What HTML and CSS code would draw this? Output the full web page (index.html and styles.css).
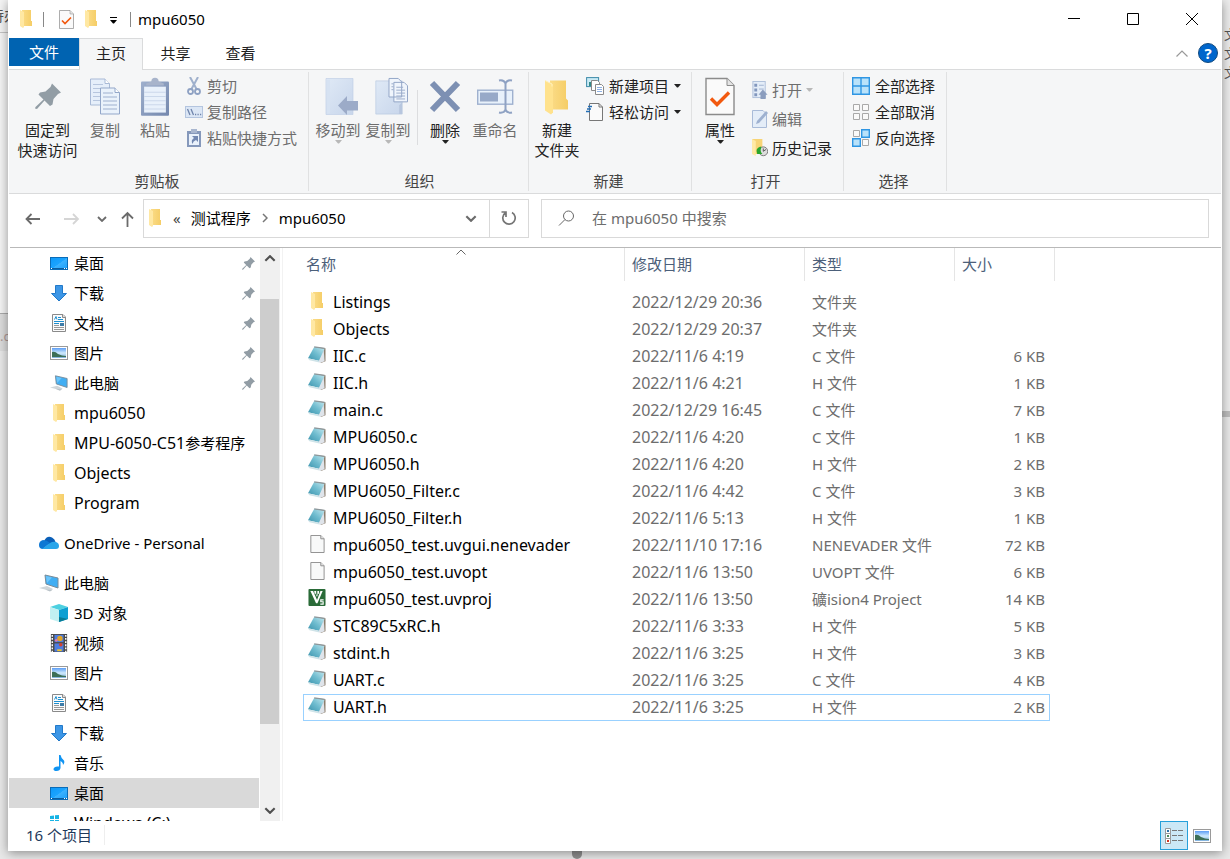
FILE: index.html
```
<!DOCTYPE html>
<html lang="zh-CN">
<head>
<meta charset="utf-8">
<title>mpu6050</title>
<link rel="stylesheet" href="styles.css">
</head>
<body>
<svg class="sprite" aria-hidden="true">
  <defs>
    <linearGradient id="gFold" x1="0" x2="1"><stop offset="0" stop-color="#fbdc88"/><stop offset="1" stop-color="#f5cd66"/></linearGradient>
    <linearGradient id="gSky" x1="0" y1="0" x2="0" y2="1"><stop offset="0" stop-color="#5c9df5"/><stop offset="0.5" stop-color="#cfeafc"/><stop offset="1" stop-color="#7fb0dc"/></linearGradient>
    <linearGradient id="gNote" x1="0" y1="1" x2="1" y2="0"><stop offset="0" stop-color="#3b93ad"/><stop offset="0.5" stop-color="#6fbccf"/><stop offset="1" stop-color="#c5e8ef"/></linearGradient>
    <linearGradient id="gClip" x1="0" y1="0" x2="1" y2="1"><stop offset="0" stop-color="#9fb0cd"/><stop offset="1" stop-color="#7488ae"/></linearGradient>
    <linearGradient id="gPale" x1="0" y1="0" x2="1" y2="1"><stop offset="0" stop-color="#dfe9f6"/><stop offset="1" stop-color="#c8d6eb"/></linearGradient>
    <linearGradient id="gDesk" x1="0" y1="0" x2="1" y2="1"><stop offset="0" stop-color="#0d98f8"/><stop offset="0.5" stop-color="#1ba4ff"/><stop offset="0.52" stop-color="#3bb2ff"/><stop offset="1" stop-color="#1a9ef8"/></linearGradient>
  </defs>
  <symbol id="folder" viewBox="0 0 12 18"><path d="M2 0H11V11H12V16H2z" fill="url(#gFold)"/><path d="M0 0L4 2V17L3 18L0 16z" fill="#ffe8a3"/></symbol>
  <symbol id="checkdoc" viewBox="0 0 30 38"><path d="M1 1H22L29 8V37H1z" fill="#fafafa" stroke="#8b8b8b" stroke-width="1.4"/><path d="M22 1V8H29" fill="#e4e4e4" stroke="#8b8b8b"/><path d="M6 21L12 27L24 15" fill="none" stroke="#f2590f" stroke-width="3.4"/></symbol>
  <symbol id="pin" viewBox="0 0 26 26"><path d="M17 0L26 9L23 10.500L18.500 15.500L17.500 21L15 22.500L9.500 17L2 25.500L0 25L.5 23.500L8.500 16L3.500 11L5 9L10.500 8L15.500 3.500z" fill="#929da5"/></symbol>
  <symbol id="copy" viewBox="0 0 30 36"><path d="M.5 .5H15L19.500 5V26.500H.5z" fill="#e6effa" stroke="#a9bad6"/><path d="M15 .5V5H19.500" fill="#fff" stroke="#a9bad6"/><path d="M3 6h10M3 10h13M3 14h13M3 18h13M3 22h13" stroke="#b7c6de"/><path d="M10.500 9.500H25L29.500 14V35.500H10.500z" fill="#eaf2fb" stroke="#93a7c9"/><path d="M25 9.500V14H29.500" fill="#fff" stroke="#93a7c9"/><path d="M13 14.500h10M13 18.500h14M13 22.500h14M13 26.500h14M13 30.500h14" stroke="#9eb0cf"/></symbol>
  <symbol id="paste" viewBox="0 0 27 37"><rect y="4" width="27" height="33" rx="1" fill="url(#gClip)"/><rect x="3" y="9" width="21" height="25" fill="#e9f1fb"/><path d="M3 14.500h21M3 18.500h21M3 22.500h21M3 26.500h21M3 30.500h21" stroke="#cbd8eb"/><path d="M5 8V6L10 4a3.500 3.500 0 0 1 7 0L22 6V8z" fill="#a8b4cb"/></symbol>
  <symbol id="cut" viewBox="0 0 14 18"><path d="M3 0L9.500 12M11 0L4.500 12" stroke="#9fb0cc" stroke-width="2" fill="none"/><ellipse cx="3.500" cy="14.500" rx="2.500" ry="2.500" fill="none" stroke="#8ea1c3" stroke-width="1.800"/><ellipse cx="10.500" cy="14.500" rx="2.500" ry="2.500" fill="none" stroke="#8ea1c3" stroke-width="1.800"/></symbol>
  <symbol id="path" viewBox="0 0 18 12"><rect x=".5" y=".5" width="17" height="11" fill="#dbe6f5" stroke="#b4c5df"/><path d="M2.500 3L5 9M6 3L8.500 9M10 8.500h1.200M12.500 8.500h1.200M15 8.500h1.200" stroke="#6f84ab" stroke-width="1.300"/></symbol>
  <symbol id="shortcut" viewBox="0 0 14 18"><rect y="2" width="14" height="16" fill="#8598bb"/><rect x="4" width="6" height="4" fill="#a8b6cf"/><rect x="2" y="5" width="10" height="11" fill="#e9f1fb"/><path d="M5 7H11V13L9 11Q6 12 5.500 15Q3.500 11 7 9z" fill="#7187b1"/></symbol>
  <symbol id="moveto" viewBox="-7 0 39 38"><path d="M0 1H27V37H0z" fill="url(#gPale)" stroke="#c2d0e6" stroke-width=".7"/><path d="M1 2h3v34H1z" fill="#d6e2f2"/><path d="M12 28L21 18.500V23.500H32V33H21V37.500z" fill="#9cabc8"/></symbol>
  <symbol id="copyto" viewBox="-7 0 40 38"><path d="M0 3H27V37H0z" fill="url(#gPale)" stroke="#b8c8e0" stroke-width=".7"/><path d="M13.500 .5H23L26.500 4V19.500H13.500zM18.500 4.500H29L32.500 8V24.500H18.500z" fill="#f0f5fc" stroke="#92a5c6"/><path d="M16 6h2M16 9h2M16 12h2M21 9.500h7M21 12.500h9M21 15.500h9M21 18.500h9M21 21.500h9" stroke="#9aaccb"/><path d="M24 37V28l3-3v12z" fill="#b7c6de"/></symbol>
  <symbol id="del" viewBox="0 0 32 32"><path d="M3 2.500L29 29.500M29 2.500L3 29.500" stroke="#7d90b3" stroke-width="6"/></symbol>
  <symbol id="rename" viewBox="0 0 37 34"><rect x=".7" y="10.700" width="35" height="14" fill="#e8f1fb" stroke="#9fb1cf" stroke-width="1.400"/><rect x="3" y="13" width="18" height="9" fill="#97a9c8"/><path d="M28.500 3V31M22 1Q27 0 28.500 4Q30 0 35 1M22 33Q27 34 28.500 30Q30 34 35 33" fill="none" stroke="#8fa2c3" stroke-width="2"/></symbol>
  <symbol id="bigfolder" viewBox="0 0 24 36"><path d="M5 2H21V20L23 22V31H5z" fill="url(#gFold)"/><path d="M0 2L8 6V34L6 36L0 32z" fill="#ffe28d"/><path d="M0 2L7 5.500V8" fill="none" stroke="#fff0bd"/></symbol>
  <symbol id="newitem" viewBox="0 0 18 18"><rect x=".6" y=".6" width="12" height="9" fill="#c9eaf5" stroke="#3d8aa8"/><path d="M3 5h4v4H3z" fill="#348a87"/><path d="M5.500 3.500h6l2 2v8h-8z" fill="#fff" stroke="#8a8a8a"/><path d="M9.500 7.500h6l2 2v8h-8z" fill="#fff" stroke="#8a8a8a"/><path d="M11 10.500h5M11 12.500h5M11 14.500h5" stroke="#8fb1e4"/></symbol>
  <symbol id="easy" viewBox="0 0 18 18"><path d="M3.500 .5H13L16.500 4V17.500H3.500z" fill="#fafafa" stroke="#777"/><path d="M13 .5V4H16.500" fill="none" stroke="#777"/><path d="M2 3.500H6M1 6H5M0 8.500H4" stroke="#236eb5" stroke-width="1.400"/></symbol>
  <symbol id="openicon" viewBox="0 0 16 19"><rect x=".5" y=".5" width="13" height="17" fill="#e4edf8" stroke="#aebfda"/><path d="M2 3h3v3H2zM2 8h3v3H2zM2 13h3v3H2z" fill="#8297bd"/><path d="M7 4.500h5M7 8.500h5" stroke="#a0b2d0"/><path d="M11 9L16 14.500H14V19H8.500V14.500H6.500z" fill="#8b9dbe"/></symbol>
  <symbol id="edit" viewBox="0 0 16 18"><path d="M.5 .5H11L14.500 4V17.500H.5z" fill="#e4edf8" stroke="#a9bbd8"/><path d="M4 14L5 11L14 1L16 3L7 13z" fill="#9eb1d0"/></symbol>
  <symbol id="history" viewBox="0 0 17 19"><path d="M0 0H11V16H3z" fill="#f7d476"/><path d="M0 0L4 2V18L0 16z" fill="#ffe9a6"/><circle cx="12" cy="13" r="4.700" fill="#ddd" stroke="#777"/><path d="M12 10V13L15 11" stroke="#555" fill="none"/><path d="M9 8Q3 10 5.500 16L11 16Q8 13 10 9z" fill="#29a52d"/></symbol>
  <symbol id="selall" viewBox="0 0 18 18"><path d="M.7 .7H17.300V17.300H.7zM9 1V17M1 9H17" fill="#b9e2fa" stroke="#2f96e3" stroke-width="1.400"/></symbol>
  <symbol id="selnone" viewBox="0 0 18 18"><path d="M1.500 1.500h6v6h-6zM10.500 1.500h6v6h-6zM1.500 10.500h6v6h-6zM10.500 10.500h6v6h-6z" fill="#fafafa" stroke="#a9a9a9"/></symbol>
  <symbol id="selinv" viewBox="0 0 18 18"><path d="M1.500 1.500h6v6h-6zM10.500 10.500h6v6h-6z" fill="#fafafa" stroke="#a9a9a9"/><path d="M9.700 .7h7.600v7.600h-7.600zM.7 9.700h7.600v7.600H.7z" fill="#b9e2fa" stroke="#2f96e3" stroke-width="1.400"/></symbol>
  <symbol id="desktop" viewBox="0 0 18 18"><rect x=".5" y="3.500" width="17" height="12" fill="url(#gDesk)" stroke="#0a6cb8"/><path d="M1 14.500H17" stroke="#0c5d9f"/><path d="M1 14.500h1M14 14.500h1M16 14.500h1" stroke="#fff"/></symbol>
  <symbol id="download" viewBox="0 0 18 18"><path d="M5.500 1.500H12.500V9.500H16.500L9 17L1.500 9.500H5.500z" fill="#3c96e6" stroke="#2279c9"/></symbol>
  <symbol id="docs" viewBox="0 0 18 18"><path d="M2.500 .5H13L15.500 3V17.500H2.500z" fill="#fbfbfb" stroke="#8a8a8a"/><path d="M12.500 .5V3.500H15.500" fill="#ddd" stroke="#8a8a8a"/><path d="M4.500 5.500L6 2.500L7 5.500M8 3.500h3M8 5.500h5M4 7.500h10M4 9.500h5" stroke="#1c8fd0" fill="none"/><path d="M4 11.500h5M4 13.500h10M4 15.500h10" stroke="#999"/><path d="M10 9h4v3h-4z" fill="#3d7ca8"/></symbol>
  <symbol id="pics" viewBox="0 0 18 18"><rect x=".5" y="2.500" width="17" height="13" fill="#fff" stroke="#9a9a9a"/><rect x="2" y="4" width="14" height="10" fill="url(#gSky)"/><path d="M2 8Q5 7 8 10Q12 12 16 12V13H2z" fill="#3d6f57"/></symbol>
  <symbol id="pc" viewBox="0 0 20 18"><path d="M6 1L19 4V14L7 10z" fill="#41aef3" stroke="#7b8c98"/><path d="M7 2L13 3.500L8 9z" fill="#6cc5fa"/><path d="M0 14L8 12L14 15L12 17z" fill="#cfd6da"/><path d="M6 15.500L13 16L11 17.500z" fill="#b9c2c8"/></symbol>
  <symbol id="onedrive" viewBox="0 0 20 14"><path d="M5 5Q8 -1 13 1.500Q16 3 16.500 6L10 9z" fill="#0a5fb8"/><path d="M4 4Q0 5 0 9Q0 13 4 13L11 7Q8 4 4 4z" fill="#0d78d4"/><path d="M3 13L11 7Q14 5 17 6Q20 7 20 10Q20 13 17 13z" fill="#28a5ea"/></symbol>
  <symbol id="cube" viewBox="0 0 18 18"><path d="M9 0L18 3L9 6L0 3z" fill="#4dd0e0"/><path d="M0 3L9 6V18L0 15z" fill="#c2f0f2"/><path d="M9 6L18 3V15L9 18z" fill="#0d9fd2"/><path d="M9 13L18 15L9 18z" fill="#087c96"/></symbol>
  <symbol id="video" viewBox="0 0 18 20"><rect width="18" height="20" fill="#4a4a4a"/><path d="M1.500 1V20M16.500 1V20" stroke="#fff" stroke-width="1.600" stroke-dasharray="2 1.500"/><rect x="4" y="1" width="10" height="8" fill="#4d7ce0"/><rect x="4" y="10.500" width="10" height="9" fill="#4d7ce0"/><circle cx="10" cy="5" r="3" fill="#e0a324"/><circle cx="6" cy="7" r="1.500" fill="#e678a5"/><circle cx="11" cy="12" r="2" fill="#d2402c"/><path d="M7 17h5v2H7z" fill="#f0c52c"/></symbol>
  <symbol id="music" viewBox="0 0 18 18"><path d="M9 1H10.500Q11 4 14 6.500Q15 9 13 11Q13 8 10.500 7V14Q10 17 6.500 17Q3.500 17 3.500 15Q4 12.500 7.500 12.500H9z" fill="#1094f2"/></symbol>
  <symbol id="drive" viewBox="0 0 18 18"><path d="M0 2L4 1.500V5H0zM5 1.300L9 1V5H5zM0 6H4V9H0zM5 6H9V9H5z" fill="#17b4e5"/></symbol>
  <symbol id="note" viewBox="0 0 20 19"><path d="M8 1L19 2.500V16L14 18z" fill="#8c7f6e"/><path d="M17 3L18 16L13 18L11 14z" fill="#dfe4ea"/><path d="M7 1L18 3L12 15.500L.5 13z" fill="url(#gNote)"/><path d="M7 1L18 2.500" stroke="#8d979b" stroke-width="1.400"/><path d="M.5 13L12 15.500L12.500 17.500L2 15z" fill="#cfe3e8"/></symbol>
  <symbol id="blank" viewBox="0 0 20 19"><path d="M3.500 .5H14L17.500 4V18.500H3.500z" fill="#f8f9f9" stroke="#8d8d8d"/><path d="M14 .5V4H17.500" fill="#e8e8e8" stroke="#8d8d8d"/></symbol>
  <symbol id="keil" viewBox="0 0 20 19"><rect x="1" width="18" height="18" rx="1" fill="#2a6b38"/><path d="M3 2H16L10.500 15H9z" fill="#fff"/><path d="M6.500 2L10 10L13 2M9.800 2V6" fill="none" stroke="#2a6b38" stroke-width="1.300"/><path d="M8 2V5M11.500 2V5" stroke="#fff" stroke-width="1.300"/><path d="M17 11.500H14V13.500H16.500V16H13.500" fill="none" stroke="#fff" stroke-width="1.200"/></symbol>
  <symbol id="chev" viewBox="0 0 10 6"><path d="M1 1L5 5L9 1" fill="none" stroke="currentColor" stroke-width="1.800"/></symbol>
  <symbol id="caret" viewBox="0 0 7 4"><path d="M0 0H7L4 3.500H3z" fill="currentColor"/></symbol>
</svg>

<div class="behind">
  <div class="behind-left"><span>待办</span><i></i></div>
  <div class="behind-tab">.c</div>
  <div class="behind-right"><span>文</span><span>文</span><span>文</span></div>
  <div class="behind-knob"></div>
</div>

<div class="window">
  <header class="titlebar">
    <svg class="i-folder"><use href="#folder"/></svg>
    <span class="tsep"></span>
    <button class="qbtn" aria-label="属性"><svg class="i-check"><use href="#checkdoc"/></svg></button>
    <button class="qbtn" aria-label="新建文件夹"><svg class="i-folder"><use href="#folder"/></svg></button>
    <button class="qbtn qmore" aria-label="自定义快速访问工具栏"><svg class="i-caret"><use href="#caret"/></svg></button>
    <span class="tsep"></span>
    <h1 class="title">mpu6050</h1>
    <div class="winbtns">
      <button aria-label="最小化"><svg width="12" height="12"><path d="M0 5.500H12" stroke="#000"/></svg></button>
      <button aria-label="最大化"><svg width="12" height="12"><path d="M.5 .5H11.500V11.500H.5z" fill="none" stroke="#000"/></svg></button>
      <button aria-label="关闭"><svg width="12" height="12"><path d="M0 0L12 12M12 0L0 12" stroke="#000"/></svg></button>
    </div>
  </header>

  <nav class="tabs">
    <button class="tab file">文件</button>
    <button class="tab active">主页</button>
    <button class="tab">共享</button>
    <button class="tab">查看</button>
    <div class="tabs-end">
      <button class="collapse" aria-label="最小化功能区"><svg width="12" height="7"><path d="M.5 6.500L6 1L11.500 6.500" fill="none" stroke="#999" stroke-width="1.200"/></svg></button>
      <button class="help" aria-label="帮助">?</button>
    </div>
  </nav>

  <section class="ribbon">
    <div class="group">
      <div class="gbody">
        <button class="big w-pin"><svg class="i-pin"><use href="#pin"/></svg><span>固定到<br>快速访问</span></button>
        <button class="big w-46 off"><svg class="i-copy"><use href="#copy"/></svg><span>复制</span></button>
        <button class="big w-54 off"><svg class="i-paste"><use href="#paste"/></svg><span>粘贴</span></button>
        <div class="smalls">
          <button class="small off"><svg class="i-16"><use href="#cut"/></svg>剪切</button>
          <button class="small off"><svg class="i-path"><use href="#path"/></svg>复制路径</button>
          <button class="small off"><svg class="i-16"><use href="#shortcut"/></svg>粘贴快捷方式</button>
        </div>
      </div>
      <div class="glabel">剪贴板</div>
    </div>
    <div class="group g-org">
      <div class="gbody">
        <button class="big w-50 off"><svg class="i-move"><use href="#moveto"/></svg><span>移动到</span><svg class="i-caret"><use href="#caret"/></svg></button>
        <button class="big w-50 off"><svg class="i-move"><use href="#copyto"/></svg><span>复制到</span><svg class="i-caret"><use href="#caret"/></svg></button>
        <span class="gsep"></span>
        <button class="big w-46"><svg class="i-del"><use href="#del"/></svg><span>删除</span><svg class="i-caret"><use href="#caret"/></svg></button>
        <button class="big w-54 off"><svg class="i-rename"><use href="#rename"/></svg><span>重命名</span></button>
      </div>
      <div class="glabel">组织</div>
    </div>
    <div class="group g-new">
      <div class="gbody">
        <button class="big w-50"><svg class="i-bigfolder"><use href="#bigfolder"/></svg><span>新建<br>文件夹</span></button>
        <div class="smalls">
          <button class="small"><svg class="i-18"><use href="#newitem"/></svg>新建项目<svg class="i-caret"><use href="#caret"/></svg></button>
          <button class="small"><svg class="i-18"><use href="#easy"/></svg>轻松访问<svg class="i-caret"><use href="#caret"/></svg></button>
        </div>
      </div>
      <div class="glabel">新建</div>
    </div>
    <div class="group g-open">
      <div class="gbody">
        <button class="big w-50"><svg class="i-prop"><use href="#checkdoc"/></svg><span>属性</span><svg class="i-caret"><use href="#caret"/></svg></button>
        <div class="smalls tall">
          <button class="small off"><svg class="i-16"><use href="#openicon"/></svg>打开<svg class="i-caret"><use href="#caret"/></svg></button>
          <button class="small off"><svg class="i-16"><use href="#edit"/></svg>编辑</button>
          <button class="small"><svg class="i-16"><use href="#history"/></svg>历史记录</button>
        </div>
      </div>
      <div class="glabel">打开</div>
    </div>
    <div class="group">
      <div class="gbody">
        <div class="smalls">
          <button class="small"><svg class="i-18"><use href="#selall"/></svg>全部选择</button>
          <button class="small"><svg class="i-18"><use href="#selnone"/></svg>全部取消</button>
          <button class="small"><svg class="i-18"><use href="#selinv"/></svg>反向选择</button>
        </div>
      </div>
      <div class="glabel">选择</div>
    </div>
  </section>

  <div class="navbar">
    <button class="nav n-back" aria-label="后退"><svg width="16" height="12"><path d="M15 6H1.500M6.500 1L1.500 6L6.500 11" fill="none" stroke="#6b6b6b" stroke-width="1.800"/></svg></button>
    <button class="nav n-fwd" aria-label="前进"><svg width="16" height="12"><path d="M0 6H14M9 1L14 6L9 11" fill="none" stroke="#d5d5d5" stroke-width="1.800"/></svg></button>
    <button class="nav n-recent" aria-label="最近位置"><svg width="10" height="6"><use href="#chev"/></svg></button>
    <button class="nav n-up" aria-label="向上"><svg width="13" height="16"><path d="M6.500 16V2M1 7.500L6.500 2L12 7.500" fill="none" stroke="#6b6b6b" stroke-width="1.800"/></svg></button>
    <div class="address">
      <svg class="i-folder"><use href="#folder"/></svg>
      <span class="dbl">«</span>
      <button class="crumb">测试程序</button>
      <svg class="crumb-sep" width="6" height="10"><path d="M1 1L5 5L1 9" fill="none" stroke="#777" stroke-width="1.500"/></svg>
      <button class="crumb">mpu6050</button>
      <button class="drop" aria-label="以前的位置"><svg width="12" height="7"><use href="#chev"/></svg></button>
      <button class="refresh" aria-label="刷新"><svg width="16" height="16"><path d="M11 2.500A6.200 6.200 0 1 1 4.500 2.800M5 7V2H.5" fill="none" stroke="#757575" stroke-width="1.700"/></svg></button>
    </div>
    <label class="search">
      <svg width="17" height="17"><circle cx="10.500" cy="6" r="5" fill="none" stroke="#666"/><path d="M7 9.500L1 15.500" stroke="#666"/></svg>
      <input type="text" placeholder="在 mpu6050 中搜索" aria-label="搜索">
    </label>
  </div>

  <main class="main">
    <aside class="sidebar">
      <ul class="tree">
        <li><a href="#"><svg><use href="#desktop"/></svg>桌面<svg class="tpin"><use href="#pin"/></svg></a></li>
        <li><a href="#"><svg><use href="#download"/></svg>下载<svg class="tpin"><use href="#pin"/></svg></a></li>
        <li><a href="#"><svg><use href="#docs"/></svg>文档<svg class="tpin"><use href="#pin"/></svg></a></li>
        <li><a href="#"><svg><use href="#pics"/></svg>图片<svg class="tpin"><use href="#pin"/></svg></a></li>
        <li><a href="#"><svg><use href="#pc"/></svg>此电脑<svg class="tpin"><use href="#pin"/></svg></a></li>
        <li><a href="#"><svg><use href="#folder"/></svg><span class="lat">mpu6050</span></a></li>
        <li><a href="#"><svg><use href="#folder"/></svg><span class="lat">MPU-6050-C51</span>参考程序</a></li>
        <li><a href="#"><svg><use href="#folder"/></svg><span class="lat">Objects</span></a></li>
        <li><a href="#"><svg><use href="#folder"/></svg><span class="lat">Program</span></a></li>
        <li class="root"><a href="#"><svg><use href="#onedrive"/></svg>OneDrive - Personal</a></li>
        <li class="root"><a href="#"><svg><use href="#pc"/></svg>此电脑</a></li>
        <li><a href="#"><svg><use href="#cube"/></svg>3D 对象</a></li>
        <li><a href="#"><svg><use href="#video"/></svg>视频</a></li>
        <li><a href="#"><svg><use href="#pics"/></svg>图片</a></li>
        <li><a href="#"><svg><use href="#docs"/></svg>文档</a></li>
        <li><a href="#"><svg><use href="#download"/></svg>下载</a></li>
        <li><a href="#"><svg><use href="#music"/></svg>音乐</a></li>
        <li class="sel"><a href="#"><svg><use href="#desktop"/></svg>桌面</a></li>
        <li><a href="#"><svg><use href="#drive"/></svg><span class="lat">Windows (C:)</span></a></li>
      </ul>
      <div class="scrollbar">
        <button aria-label="向上滚动"><svg class="flip" width="12" height="7"><use href="#chev"/></svg></button>
        <span class="s-before"></span><span class="s-thumb"></span><span class="s-after"></span>
        <button aria-label="向下滚动"><svg width="12" height="7"><use href="#chev"/></svg></button>
      </div>
    </aside>
    <section class="files">
      <table>
        <colgroup><col class="c-name"><col class="c-date"><col class="c-type"><col class="c-size"><col class="c-end"></colgroup>
        <thead><tr><th class="sorted">名称<svg class="sort" width="10" height="6"><path d="M.5 5.500L5 1L9.500 5.500" fill="none" stroke="#666"/></svg></th><th>修改日期</th><th>类型</th><th colspan="2">大小</th></tr></thead>
        <tbody>
          <tr class="first"><td><svg><use href="#folder"/></svg>Listings</td><td>2022/12/29 20:36</td><td>文件夹</td><td></td><td></td></tr>
          <tr><td><svg><use href="#folder"/></svg>Objects</td><td>2022/12/29 20:37</td><td>文件夹</td><td></td><td></td></tr>
          <tr><td><svg><use href="#note"/></svg>IIC.c</td><td>2022/11/6 4:19</td><td>C 文件</td><td>6 KB</td><td></td></tr>
          <tr><td><svg><use href="#note"/></svg>IIC.h</td><td>2022/11/6 4:21</td><td>H 文件</td><td>1 KB</td><td></td></tr>
          <tr><td><svg><use href="#note"/></svg>main.c</td><td>2022/12/29 16:45</td><td>C 文件</td><td>7 KB</td><td></td></tr>
          <tr><td><svg><use href="#note"/></svg>MPU6050.c</td><td>2022/11/6 4:20</td><td>C 文件</td><td>1 KB</td><td></td></tr>
          <tr><td><svg><use href="#note"/></svg>MPU6050.h</td><td>2022/11/6 4:20</td><td>H 文件</td><td>2 KB</td><td></td></tr>
          <tr><td><svg><use href="#note"/></svg>MPU6050_Filter.c</td><td>2022/11/6 4:42</td><td>C 文件</td><td>3 KB</td><td></td></tr>
          <tr><td><svg><use href="#note"/></svg>MPU6050_Filter.h</td><td>2022/11/6 5:13</td><td>H 文件</td><td>1 KB</td><td></td></tr>
          <tr><td><svg><use href="#blank"/></svg>mpu6050_test.uvgui.nenevader</td><td>2022/11/10 17:16</td><td>NENEVADER 文件</td><td>72 KB</td><td></td></tr>
          <tr><td><svg><use href="#blank"/></svg>mpu6050_test.uvopt</td><td>2022/11/6 13:50</td><td>UVOPT 文件</td><td>6 KB</td><td></td></tr>
          <tr><td><svg><use href="#keil"/></svg>mpu6050_test.uvproj</td><td>2022/11/6 13:50</td><td>礦ision4 Project</td><td>14 KB</td><td></td></tr>
          <tr><td><svg><use href="#note"/></svg>STC89C5xRC.h</td><td>2022/11/6 3:33</td><td>H 文件</td><td>5 KB</td><td></td></tr>
          <tr><td><svg><use href="#note"/></svg>stdint.h</td><td>2022/11/6 3:25</td><td>H 文件</td><td>3 KB</td><td></td></tr>
          <tr><td><svg><use href="#note"/></svg>UART.c</td><td>2022/11/6 3:25</td><td>C 文件</td><td>4 KB</td><td></td></tr>
          <tr class="focus"><td><svg><use href="#note"/></svg>UART.h</td><td>2022/11/6 3:25</td><td>H 文件</td><td>2 KB</td><td></td></tr>
        </tbody>
      </table>
    </section>
  </main>

  <footer class="status">
    <span class="count">16 个项目</span>
    <div class="views">
      <button class="view on" aria-label="详细信息"><svg width="18" height="16"><path d="M.5 .5h5v5h-5zM.5 5.500h5v5h-5zM.5 10.500h5v5h-5z" fill="#fff" stroke="#999"/><path d="M2 3h2" stroke="#2f6fa5" stroke-width="2"/><path d="M2 8h2" stroke="#4c8a5b" stroke-width="2"/><path d="M2 13h2" stroke="#d0331f" stroke-width="2"/><path d="M7 2.500h5M13 2.500h5M7 7.500h5M13 7.500h5M7 12.500h5M13 12.500h5" stroke="#777"/></svg></button>
      <button class="view" aria-label="大图标"><svg width="18" height="18"><use href="#pics"/></svg></button>
    </div>
  </footer>
</div>
</body>
</html>
```
FILE: styles.css
```
* { box-sizing: border-box; }
html, body { height: 100%; margin: 0; }
body {
  position: relative;
  display: flex;
  padding: 0 8px 8px;
  overflow: hidden;
  background: #e8e8e8;
  color: #000;
  font: 15px/20px "Noto Sans", "Noto Sans CJK SC", sans-serif;
}
button { margin: 0; padding: 0; border: 0; background: none; color: inherit; font: inherit; }
a { color: inherit; text-decoration: none; }
svg { flex: none; display: block; }
.sprite { position: absolute; width: 0; height: 0; }

/* Windows lying underneath */
.behind { position: absolute; inset: 0; overflow: hidden; color: #555; }
.behind-left { position: absolute; left: 0; top: 0; width: 8px; height: 314px; background: #f4f4f4; border-bottom: 1px solid #aaa; }
.behind-left span { position: absolute; left: -11px; top: 5px; white-space: nowrap; }
.behind-left i { position: absolute; left: 0; top: 32px; width: 8px; height: 1px; background: #c4c4c4; }
.behind-tab { position: absolute; left: 0; top: 314px; width: 8px; height: 37px; padding-top: 12px; background: #dcdcdc; color: #b09a96; font-size: 13px; }
.behind-right { position: absolute; right: 0; top: 0; width: 8px; height: 417px; padding-top: 24px; background: #ececec; border-bottom: 6px solid #bdbdbd; }
.behind-right span { display: block; height: 19px; padding-left: 2px; font-size: 13px; }
.behind-knob { position: absolute; left: 572px; bottom: 0; width: 10px; height: 8px; border-radius: 0 0 5px 5px; background: #8f8f8f; }

.window {
  position: relative;
  display: flex;
  flex-direction: column;
  flex: 1;
  min-width: 0;
  padding: 0 1px;
  background: #fff;
  box-shadow: 0 2px 10px rgba(0, 0, 0, .4);
}

/* Title bar */
.titlebar { display: flex; align-items: center; height: 38px; padding-left: 11px; }
.i-folder { width: 12px; height: 18px; }
.i-check { width: 15px; height: 19px; }
.i-caret { width: 7px; height: 4px; }
.tsep { width: 1px; height: 15px; margin-left: 11px; background: #888; }
.qbtn { margin-left: 11px; }
.tsep + .qbtn { margin-left: 15px; }
.qmore { margin-left: 13px; padding-top: 2px; }
.qmore::before { content: ""; display: block; width: 7px; height: 1px; margin-bottom: 2px; background: #000; }
.qmore + .tsep { margin-left: 13px; }
.title { margin: 0 0 0 7px; font-size: 15px; font-weight: normal; }
.winbtns { display: flex; margin-left: auto; }
.winbtns button { display: flex; justify-content: center; align-items: center; width: 59px; height: 38px; }

/* Ribbon tabs */
.tabs { display: flex; align-items: flex-start; height: 32px; border-bottom: 1px solid #dadbdc; color: #222; }
.tab { width: 65px; height: 31px; padding-bottom: 2px; }
.tab.file { width: 70px; height: 28px; padding: 0; background: #0063b1; color: #fff; }
.tab.active { width: 64px; height: 32px; padding-bottom: 3px; background: #f5f6f7; border: 1px solid #dadbdc; border-bottom: 0; }
.tabs-end { display: flex; align-items: center; gap: 10px; height: 30px; margin-left: auto; padding-right: 3px; }
.help { width: 20px; height: 20px; border: 1px solid #124b80; border-radius: 50%; background: #0066cc; color: #fff; font-weight: bold; line-height: 18px; }

/* Ribbon */
.ribbon { display: flex; height: 124px; padding-top: 2px; background: #f5f6f7; border-bottom: 1px solid #dadbdc; }
.group { display: flex; flex-direction: column; height: 119px; padding: 1px 11px 0 4px; border-right: 1px solid #e0e1e2; color: #222; }
.gbody { display: flex; flex: 1; }
.glabel { padding-left: 4px; text-align: center; color: #444; }
.big { display: flex; flex-direction: column; align-items: center; }
.big > svg:first-child { margin: 4px 0; }
.big > span { white-space: nowrap; }
.off { color: #6d6d6d; }
.off .i-caret { color: #b8b8b8; }
.w-pin { width: 69px; }
.w-46 { width: 46px; }
.w-50 { width: 50px; }
.w-54 { width: 54px; }
.i-pin, .i-copy, .i-paste, .i-move, .i-del, .i-rename, .i-bigfolder, .i-prop { height: 39px; }
.i-pin { width: 26px; }
.i-copy { width: 30px; }
.i-paste { width: 28px; }
.i-move { width: 39px; }
.i-del { width: 32px; }
.i-rename { width: 37px; }
.i-bigfolder { width: 24px; }
.i-prop { width: 30px; }
.smalls { margin-left: 4px; }
.small { display: flex; align-items: center; gap: 5px; height: 26px; white-space: nowrap; }
.tall { margin-left: 7px; padding-top: 2px; }
.tall .small { height: 29px; gap: 4px; }
.i-16 { width: 16px; height: 18px; }
.i-18, .i-path { width: 18px; height: 18px; }
.small .i-path { margin: 0 -1px; }
.gsep { width: 1px; height: 55px; margin: 17px 4px 0 4px; background: #dcdddf; }
.g-org { padding-right: 6px; }
.g-new { padding-left: 3px; padding-right: 10px; }
.g-open { padding-left: 3px; }

/* Address row */
.navbar { display: flex; align-items: center; height: 54px; padding: 0 12px 4px 15px; margin-left: 1px; border-bottom: 1px solid #b9b9b9; color: #6b6b6b; }
.n-fwd { margin-left: 23px; }
.n-recent { margin-left: 17px; }
.n-up { margin-left: 14px; }
.address { display: flex; align-items: center; width: 386px; height: 39px; margin-left: 9px; padding: 0 0 1px 5px; border: 1px solid #d9d9d9; color: #000; }
.dbl { margin: 0 10px 0 12px; color: #444; }
.crumb-sep { margin: 0 11px; }
.drop { margin-left: auto; width: 36px; height: 37px; display: flex; align-items: center; justify-content: center; color: #6b6b6b; }
.refresh { width: 39px; height: 37px; display: flex; align-items: center; justify-content: center; border-left: 1px solid #d9d9d9; }
.search { display: flex; align-items: center; flex: 1; height: 39px; margin-left: 12px; padding: 0 0 1px 16px; border: 1px solid #d9d9d9; }
.search input { flex: 1; min-width: 0; margin-left: 17px; padding: 0; border: 0; outline: 0; background: none; font: inherit; }
.search input::placeholder { color: #6d6d6d; opacity: 1; }

/* Body */
.main { display: flex; flex: 1; min-height: 0; }
.sidebar { display: flex; width: 274px; border-right: 1px solid #f2f2f2; overflow: hidden; }
.tree { flex: 1; min-width: 0; margin: 0 1px 0 0; padding: 0; list-style: none; }
.tree a { display: flex; align-items: center; height: 30px; padding-left: 41px; white-space: nowrap; }
.tree a > svg:first-child { width: 18px; height: 18px; margin-right: 6px; }
.tree .root { margin: 10px 0; }
.tree .root + .root { margin-bottom: 0; }
.tree .root a { padding-left: 30px; }
.tree .root a > svg:first-child { width: 20px; margin-right: 5px; }
.tree .sel { background: #d9d9d9; }
.tree .tpin { width: 13px; height: 13px; margin-left: auto; margin-right: 4px; }
.lat { font-size: 16px; }
.scrollbar { display: flex; flex-direction: column; width: 20px; margin-right: 2px; background: #f0f0f0; }
.scrollbar button { display: flex; align-items: center; justify-content: center; height: 21px; color: #505050; }
.flip { transform: rotate(180deg); }
.s-before { flex: 30; }
.s-thumb { flex: 425; margin-right: 1px; background: #cdcdcd; }
.s-after { flex: 76; }

.files { flex: 1; min-width: 0; padding-left: 20px; overflow: hidden; }
table { width: 752px; table-layout: fixed; border-collapse: separate; border-spacing: 0; }
.c-name { width: 322px; }
.c-date { width: 180px; }
.c-type { width: 150px; }
.c-size { width: 95px; }
.c-end { width: 5px; }
th { height: 33px; padding: 0 0 2px 7px; border-right: 1px solid #e5e5e5; text-align: left; font-weight: normal; color: #4c607a; }
th:first-child { position: relative; padding-left: 3px; }
.sort { position: absolute; left: 153px; top: 1px; }
td { height: 27px; padding: 0 0 2px 7px; border: 0 solid #99d1ff; color: #6d6d6d; white-space: nowrap; }
td:nth-child(-n+2) { font-size: 16px; }
.first td { border-top: 8px solid transparent; height: 35px; }
td:first-child { padding-left: 4px; color: #000; }
td:first-child svg { display: inline-block; width: 20px; height: 18px; margin-right: 6px; vertical-align: -2px; }
td:nth-child(4) { padding: 0 5px 2px 0; text-align: right; }
.focus td:not(:last-child) { border-top-width: 1px; border-bottom-width: 1px; }
.focus td:first-child { border-left-width: 1px; padding-left: 3px; }
.focus td:nth-child(4) { border-right-width: 1px; padding-right: 4px; }

/* Status bar */
.status { display: flex; align-items: flex-start; height: 30px; padding: 0 5px 0 17px; color: #1e395b; }
.count { margin-top: 4px; padding-right: 12px; border-right: 1px solid #eee; }
.views { display: flex; margin-left: auto; }
.view { display: flex; align-items: center; justify-content: center; width: 28px; height: 29px; }
.view.on { border: 1px solid #26a0da; background: #cbe8f6; }
```
